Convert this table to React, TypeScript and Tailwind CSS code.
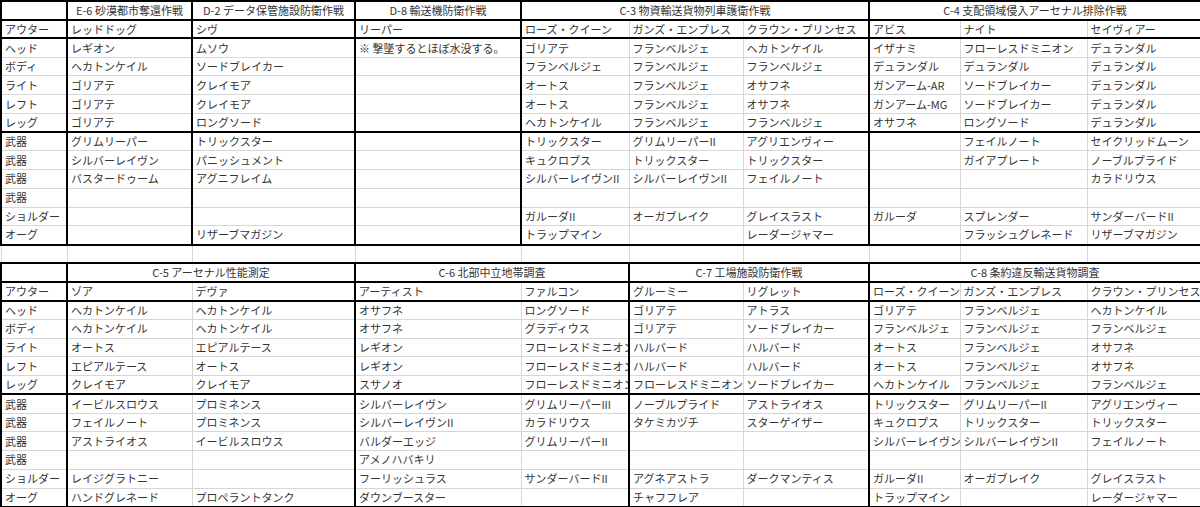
import React from "react";

type Cell = { text?: string; span?: number; center?: boolean };

const top: Cell[][] = [
  [
    {},
    { text: "E-6 砂漠都市奪還作戦", center: true },
    { text: "D-2 データ保管施設防衛作戦", center: true },
    { text: "D-8 輸送機防衛作戦", center: true },
    { text: "C-3 物資輸送貨物列車護衛作戦", span: 3, center: true },
    { text: "C-4 支配領域侵入アーセナル排除作戦", span: 3, center: true },
  ],
];

const topRows: string[][] = [
  ["アウター", "レッドドッグ", "シヴ", "リーパー", "ローズ・クイーン", "ガンズ・エンプレス", "クラウン・プリンセス", "アビス", "ナイト", "セイヴィアー"],
  ["ヘッド", "レギオン", "ムソウ", "※ 撃墜するとほぼ水没する。", "ゴリアテ", "フランベルジェ", "ヘカトンケイル", "イザナミ", "フローレスドミニオン", "デュランダル"],
  ["ボディ", "ヘカトンケイル", "ソードブレイカー", "", "フランベルジェ", "フランベルジェ", "フランベルジェ", "デュランダル", "デュランダル", "デュランダル"],
  ["ライト", "ゴリアテ", "クレイモア", "", "オートス", "フランベルジェ", "オサフネ", "ガンアーム-AR", "ソードブレイカー", "デュランダル"],
  ["レフト", "ゴリアテ", "クレイモア", "", "オートス", "フランベルジェ", "オサフネ", "ガンアーム-MG", "ソードブレイカー", "デュランダル"],
  ["レッグ", "ゴリアテ", "ロングソード", "", "ヘカトンケイル", "フランベルジェ", "フランベルジェ", "オサフネ", "ロングソード", "デュランダル"],
  ["武器", "グリムリーパー", "トリックスター", "", "トリックスター", "グリムリーパーII", "アグリエンヴィー", "", "フェイルノート", "セイクリッドムーン"],
  ["武器", "シルバーレイヴン", "パニッシュメント", "", "キュクロプス", "トリックスター", "トリックスター", "", "ガイアプレート", "ノーブルプライド"],
  ["武器", "バスタードゥーム", "アグニフレイム", "", "シルバーレイヴンII", "シルバーレイヴンII", "フェイルノート", "", "", "カラドリウス"],
  ["武器", "", "", "", "", "", "", "", "", ""],
  ["ショルダー", "", "", "", "ガルーダII", "オーガブレイク", "グレイスラスト", "ガルーダ", "スプレンダー", "サンダーバードII"],
  ["オーグ", "", "リザーブマガジン", "", "トラップマイン", "", "レーダージャマー", "", "フラッシュグレネード", "リザーブマガジン"],
];

const bottom: Cell[][] = [
  [
    {},
    { text: "C-5 アーセナル性能測定", span: 2, center: true },
    { text: "C-6 北部中立地帯調査", span: 2, center: true },
    { text: "C-7 工場施設防衛作戦", span: 2, center: true },
    { text: "C-8 条約違反輸送貨物調査", span: 3, center: true },
  ],
];

const bottomRows: string[][] = [
  ["アウター", "ゾア", "デヴァ", "アーティスト", "ファルコン", "グルーミー", "リグレット", "ローズ・クイーン", "ガンズ・エンプレス", "クラウン・プリンセス"],
  ["ヘッド", "ヘカトンケイル", "ヘカトンケイル", "オサフネ", "ロングソード", "ゴリアテ", "アトラス", "ゴリアテ", "フランベルジェ", "ヘカトンケイル"],
  ["ボディ", "ヘカトンケイル", "ヘカトンケイル", "オサフネ", "グラディウス", "ゴリアテ", "ソードブレイカー", "フランベルジェ", "フランベルジェ", "フランベルジェ"],
  ["ライト", "オートス", "エピアルテース", "レギオン", "フローレスドミニオン", "ハルバード", "ハルバード", "オートス", "フランベルジェ", "オサフネ"],
  ["レフト", "エピアルテース", "オートス", "レギオン", "フローレスドミニオン", "ハルバード", "ハルバード", "オートス", "フランベルジェ", "オサフネ"],
  ["レッグ", "クレイモア", "クレイモア", "スサノオ", "フローレスドミニオン", "フローレスドミニオン", "ソードブレイカー", "ヘカトンケイル", "フランベルジェ", "フランベルジェ"],
  ["武器", "イービルスロウス", "プロミネンス", "シルバーレイヴン", "グリムリーパーIII", "ノーブルプライド", "アストライオス", "トリックスター", "グリムリーパーII", "アグリエンヴィー"],
  ["武器", "フェイルノート", "プロミネンス", "シルバーレイヴンII", "カラドリウス", "タケミカヅチ", "スターゲイザー", "キュクロプス", "トリックスター", "トリックスター"],
  ["武器", "アストライオス", "イービルスロウス", "バルダーエッジ", "グリムリーパーII", "", "", "シルバーレイヴン", "シルバーレイヴンII", "フェイルノート"],
  ["武器", "", "", "アメノハバキリ", "", "", "", "", "", ""],
  ["ショルダー", "レイジグラトニー", "", "フーリッシュラス", "サンダーバードII", "アグネアストラ", "ダークマンティス", "ガルーダII", "オーガブレイク", "グレイスラスト"],
  ["オーグ", "ハンドグレネード", "プロペラントタンク", "ダウンブースター", "", "チャフフレア", "", "トラップマイン", "", "レーダージャマー"],
];

const toCells = (rows: string[][]): Cell[][] => rows.map((r) => r.map((text) => ({ text })));

// thick left borders per block (column index where a block starts)
const topThick = [0, 1, 2, 3, 4, 7];
const bottomThick = [0, 1, 3, 5, 7];

type Row = { cells: Cell[]; thick: number[] | null; thickTop: boolean; last: boolean };

const rows: Row[] = [
  ...[...top, ...toCells(topRows)].map((cells, i) => ({
    cells,
    thick: topThick,
    thickTop: [0, 1, 2, 7].includes(i),
    last: i === 12,
  })),
  { cells: Array.from({ length: 10 }, () => ({})), thick: null, thickTop: true, last: false },
  ...[...bottom, ...toCells(bottomRows)].map((cells, i) => ({
    cells,
    thick: bottomThick,
    thickTop: [0, 1, 2, 7].includes(i),
    last: i === 12,
  })),
];

export default function App() {
  return (
    <div className="h-[507px] w-[1200px] overflow-hidden bg-white font-['Noto_Sans_CJK_JP',sans-serif] text-[11px] text-[#333]">
      <table className="w-[1200px] table-fixed border-collapse">
        <colgroup>
          <col className="w-[66px]" />
          <col className="w-[125px]" />
          <col className="w-[163px]" />
          <col className="w-[166px]" />
          <col className="w-[108px]" />
          <col className="w-[114px]" />
          <col className="w-[126px]" />
          <col className="w-[91px]" />
          <col className="w-[127px]" />
          <col className="w-[114px]" />
        </colgroup>
        <tbody>
          {rows.map((row, r) => {
            let col = 0;
            return (
              <tr key={r} className="h-[18.74px]">
                {row.cells.map((cell, c) => {
                  const start = col;
                  const span = cell.span ?? 1;
                  col += span;
                  const cls = [
                    "overflow-hidden whitespace-nowrap border border-[#d6d6d6] px-[3px] py-0 align-middle leading-none",
                    cell.center ? "text-center" : "text-left",
                    row.thick && row.thick.includes(start) ? "border-l-2 border-l-black" : "",
                    row.thick && col === 10 ? "border-r-2 border-r-black" : "",
                    row.thickTop ? "border-t-2 border-t-black" : "",
                    row.last ? "border-b-2 border-b-black" : "",
                  ].join(" ");
                  return (
                    <td key={c} colSpan={span} className={cls}>
                      {cell.text}
                    </td>
                  );
                })}
              </tr>
            );
          })}
        </tbody>
      </table>
    </div>
  );
}
